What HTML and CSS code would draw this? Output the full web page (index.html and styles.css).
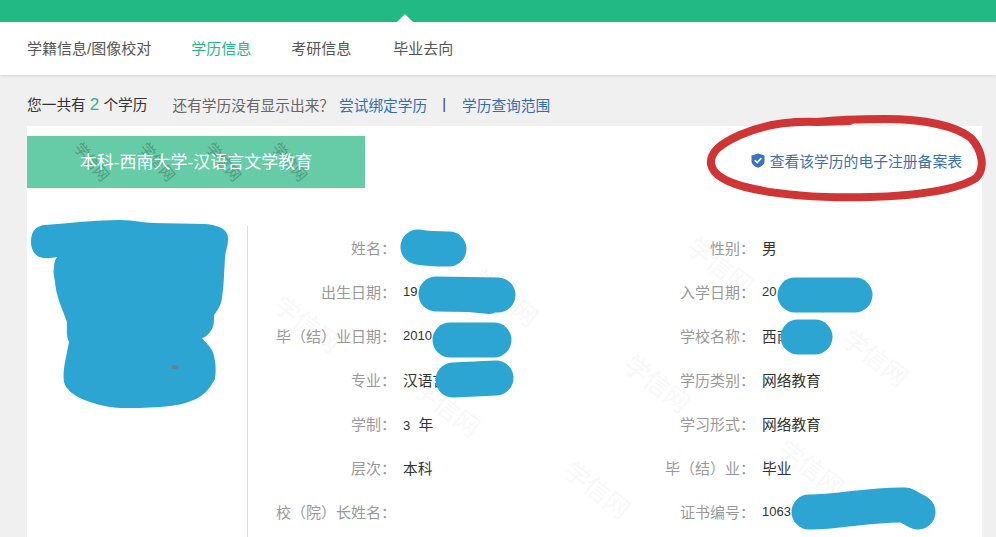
FILE: index.html
```html
<!DOCTYPE html>
<html lang="zh-CN">
<head>
    <meta charset="UTF-8">
    <meta name="viewport" content="width=device-width, initial-scale=1.0">
    <title>学历信息</title>
    <link rel="stylesheet" href="styles.css">
</head>
<body>
    <div class="topbar"><span class="arrow"></span></div>
    <nav class="nav">
        <a href="#">学籍信息/图像校对</a>
        <a href="#" class="active">学历信息</a>
        <a href="#">考研信息</a>
        <a href="#">毕业去向</a>
    </nav>

    <p class="notice">
        <span class="count">您一共有 <em>2</em> 个学历</span>
        <span class="ask">还有学历没有显示出来？</span>
        <a href="#">尝试绑定学历</a>
        <span class="sep">|</span>
        <a href="#">学历查询范围</a>
    </p>

    <div class="card">
        <svg class="marks" width="955" height="411" viewBox="27 126 955 411" aria-hidden="true">
            <text transform="translate(272 308) rotate(38)">学信网</text>
            <text transform="translate(470 282) rotate(38)">学信网</text>
            <text transform="translate(412 392) rotate(38)">学信网</text>
            <text transform="translate(685 250) rotate(38)">学信网</text>
            <text transform="translate(622 368) rotate(38)">学信网</text>
            <text transform="translate(840 342) rotate(38)">学信网</text>
            <text transform="translate(562 474) rotate(38)">学信网</text>
            <text transform="translate(776 452) rotate(38)">学信网</text>
        </svg>

        <div class="card-head">
            <div class="title">
                <svg class="title-marks" width="338" height="52" aria-hidden="true">
                    <text transform="translate(46 12) rotate(50)">学信网</text>
                    <text transform="translate(112 12) rotate(50)">学信网</text>
                    <text transform="translate(178 12) rotate(50)">学信网</text>
                    <text transform="translate(244 12) rotate(50)">学信网</text>
                </svg>
                <span>本科-西南大学-汉语言文学教育</span>
            </div>
            <a href="#" class="record">
                <svg width="14" height="15" viewBox="0 0 14 15" aria-hidden="true">
                    <path d="M7 0.5 L13.5 2.5 V8 C13.5 11.5 10.5 13.5 7 14.8 C3.5 13.5 0.5 11.5 0.5 8 V2.5 Z" fill="#3a73c0"/>
                    <path d="M3.8 7.2 L6.2 9.6 L10.4 5" fill="none" stroke="#fff" stroke-width="1.6"/>
                </svg>
                查看该学历的电子注册备案表
            </a>
        </div>

        <div class="card-body">
            <div class="photo"></div>
            <dl class="info">
                <div class="row"><dt>姓名：</dt><dd></dd></div>
                <div class="row"><dt>性别：</dt><dd>男</dd></div>
                <div class="row"><dt>出生日期：</dt><dd class="num">19</dd></div>
                <div class="row"><dt>入学日期：</dt><dd class="num">20</dd></div>
                <div class="row"><dt>毕（结）业日期：</dt><dd class="num">2010</dd></div>
                <div class="row"><dt>学校名称：</dt><dd>西南</dd></div>
                <div class="row"><dt>专业：</dt><dd>汉语言</dd></div>
                <div class="row"><dt>学历类别：</dt><dd>网络教育</dd></div>
                <div class="row"><dt>学制：</dt><dd><span class="num">3</span>&nbsp;&nbsp;年</dd></div>
                <div class="row"><dt>学习形式：</dt><dd>网络教育</dd></div>
                <div class="row"><dt>层次：</dt><dd>本科</dd></div>
                <div class="row"><dt>毕（结）业：</dt><dd>毕业</dd></div>
                <div class="row"><dt>校（院）长姓名：</dt><dd></dd></div>
                <div class="row"><dt>证书编号：</dt><dd class="num">1063</dd></div>
            </dl>
        </div>
    </div>

    <!-- scribbles drawn over the screenshot -->
    <svg class="scribble" width="996" height="537" viewBox="0 0 996 537" aria-hidden="true">
        <path class="red" d="M817 122 C790 121 762 125 740 135 C720 144 710 152 711 164 C713 176 730 184 754 189 C787 196 830 198 870 197 C915 196 958 190 976 178 C986 168 982 150 971 138 C956 126 925 119 885 119 C860 119 835 120 817 122 L850 121"/>
        <path class="blue-fill" d="M31 242 C31 232 35 226 45 225 C70 223 95 220 120 220 C135 220 143 223 153 223 L205 224 C220 225 229 230 228 240 C228 246 225 252 225 258 C224 272 224 285 222 298 C221 306 217 311 214 315 C214 322 214 325 212 329 C209 334 206 337 202 338 C207 344 213 349 214 356 C216 364 216 371 215 379 C210 388 206 393 198 398 C186 404 174 406 160 407 C146 408 133 408 120 408 C105 407 90 403 80 398 C72 394 66 389 64 382 C63 375 64 368 65 362 L69 342 C66 336 67 328 67 322 C62 308 56 296 55 282 C54 276 53 272 54 268 C54 263 55 260 57 257 C52 258 49 258 45 258 C36 258 31 251 31 242 Z"/>
        <ellipse cx="175" cy="367" rx="3.5" ry="2" fill="#6d7f86"/>
        <path class="blue" d="M418 247 C428 249 440 249 449 249"/>
        <path class="blue" d="M436 294 L498 295"/>
        <path class="blue-thin" d="M470 303 L490 305"/>
        <path class="blue" d="M450 340 L494 340"/>
        <path class="blue" d="M453 380 L496 378"/>
        <path class="blue" d="M795 295 L855 295"/>
        <path class="blue" d="M798 337 L815 337"/>
        <path class="blue" d="M809 512 C840 512 870 504 905 505 L918 512"/>
    </svg>
</body>
</html>
```

FILE: styles.css
```css
html, body {
    height: 537px;
    overflow: hidden;
}
body {
    position: relative;
    margin: 0;
    background-color: #f0f0f0;
    color: #333;
    font-family: "Liberation Sans", "Noto Sans CJK SC", sans-serif;
    font-size: 14.7px;
}
a {
    color: #2f6eb5;
    text-decoration: none;
}
.topbar {
    position: relative;
    height: 22px;
    background-color: #23b985;
}
.arrow {
    position: absolute;
    left: 397px;
    bottom: 0;
    border-left: 8px solid transparent;
    border-right: 8px solid transparent;
    border-bottom: 8px solid #ffffff;
}
.nav {
    position: relative;
    display: flex;
    gap: 40px;
    align-items: center;
    height: 50px;
    padding: 0 0 3px 27px;
    background-color: #ffffff;
    box-shadow: 0 1px 3px rgba(0, 0, 0, 0.12);
    font-size: 15px;
}
.nav a {
    color: #555;
}
.nav a.active {
    color: #23b985;
}
.nav a:last-child {
    margin-left: 2px;
}
.notice {
    display: flex;
    align-items: center;
    height: 22px;
    margin: 0;
    padding: 18px 0 11px 27px;
    color: #666;
}
.count {
    color: #333;
    margin-right: 25px;
}
.count em {
    color: #23b985;
    font-style: normal;
    font-size: 17px;
}
.ask {
    margin-right: 5px;
}
.sep {
    margin: 0 16px 0 15px;
    color: #444;
}
.card {
    position: relative;
    height: 411px;
    margin: 0 14px 0 27px;
    background-color: #ffffff;
    overflow: hidden;
}
.marks {
    position: absolute;
    left: 0;
    top: 0;
}
.marks text {
    font-size: 25px;
    fill: #f8f8f8;
}
.card-head {
    position: relative;
    display: flex;
    justify-content: space-between;
    align-items: center;
    padding: 10px 20px 0 0;
}
.title {
    position: relative;
    width: 338px;
    height: 52px;
    line-height: 54px;
    background-color: #66cca8;
    color: #ffffff;
    font-size: 17px;
    text-align: center;
}
.title-marks {
    position: absolute;
    left: 0;
    top: 0;
}
.title-marks text {
    font-size: 15px;
    fill: rgba(70, 100, 80, 0.5);
}
.title span {
    position: relative;
}
.record {
    display: flex;
    align-items: center;
    gap: 5px;
    padding-bottom: 3px;
    color: #3b6fb0;
    font-size: 14.8px;
}
.card-body {
    position: relative;
    display: flex;
    margin-top: 38px;
}
.photo {
    width: 220px;
    flex: none;
}
.info {
    display: grid;
    grid-template-columns: 359px 359px;
    grid-auto-rows: 44px;
    margin: 0;
    height: 324px;
    border-left: 1px solid #dddddd;
}
.row {
    display: flex;
    align-items: center;
    gap: 7px;
    padding-bottom: 1px;
    box-sizing: border-box;
}
.row dt {
    width: 148px;
    flex: none;
    font-size: 15px;
    text-align: right;
    color: #999;
}
.row dd {
    margin: 0;
    color: #333;
}
.row .num {
    font-size: 13px;
}
.scribble {
    position: absolute;
    left: 0;
    top: 0;
    filter: blur(0.5px);
}
.scribble .red {
    fill: none;
    stroke: #cf3535;
    stroke-width: 8;
    stroke-linecap: round;
    stroke-linejoin: round;
}
.blue-fill {
    fill: #2ca5d3;
}
.scribble .blue, .scribble .blue-thin {
    fill: none;
    stroke: #2ca5d3;
    stroke-linecap: round;
    stroke-linejoin: round;
}
.scribble .blue {
    stroke-width: 35;
}
.scribble .blue-thin {
    stroke-width: 18;
}
```
